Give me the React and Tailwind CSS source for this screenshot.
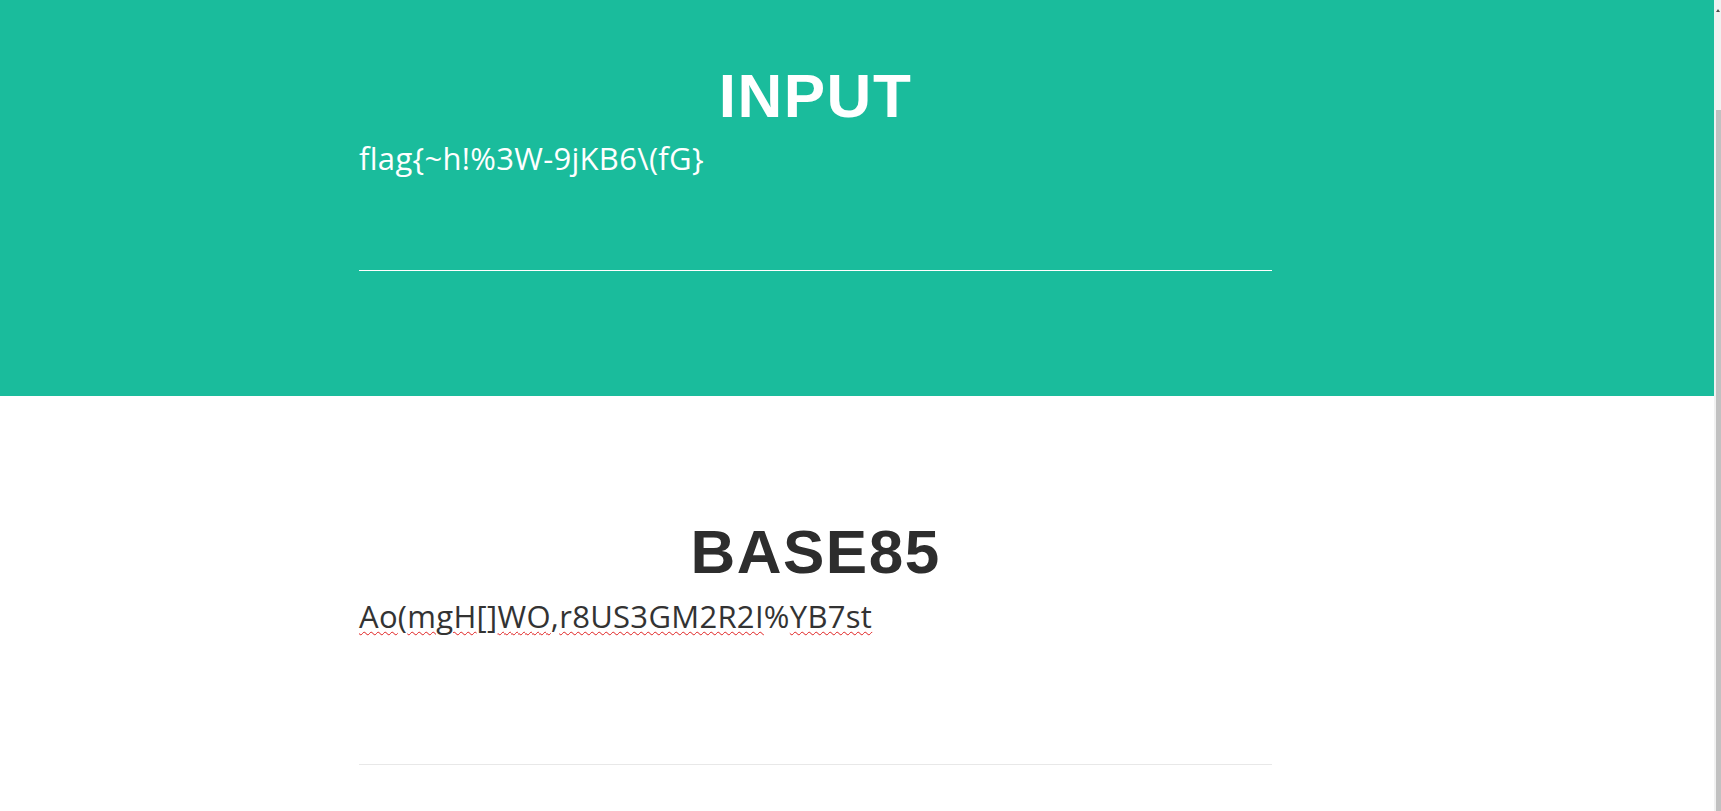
import React from 'react';

// Spellcheck-style squiggle segments of the encoded output
const OUTPUT = [
  ['Ao', true], ['(', false], ['mgH', true], ['[]', false], ['WO', true],
  [',', false], ['r8US3GM2R2I', true], ['%', false], ['YB7st', true],
];

function Section({ title, dark, children, className }) {
  return (
    <section className={className}>
      <div className="ml-[359px] w-[913px]">
        <h2
          className={
            'text-center text-[62px] leading-[62px] font-bold tracking-[1.5px] ' +
            (dark ? 'text-[#2d2d2d]' : 'text-white')
          }
          style={{ fontFamily: '"Liberation Sans", Arial, sans-serif' }}
        >
          {title}
        </h2>
        {children}
      </div>
    </section>
  );
}

function Scrollbar() {
  return (
    <div className="flex w-[7px] shrink-0 flex-col bg-[#f1f1f1]">
      <div className="flex h-[110px] justify-end pt-[9px] pr-[1px]">
        <div className="h-0 w-0 border-x-[2px] border-b-[3px] border-x-transparent border-b-[#505050]" />
      </div>
      <div className="ml-[2px] flex-1 bg-[#c1c1c1]" />
    </div>
  );
}

export default function App() {
  const font = { fontFamily: '"Open Sans", "Noto Sans", sans-serif' };
  return (
    <div className="flex h-[811px] w-full overflow-hidden bg-white">
      <main className="flex-1">
        <Section title="INPUT" className="h-[396px] bg-[#1abc9c] pt-[65px]">
          <div
            className="mt-[12px] h-[132px] border-b border-white text-[31px] leading-[38px] tracking-[0.3px] text-white"
            style={font}
          >
            flag{'{'}~h!%3W-9jKB6\(fG{'}'}
          </div>
        </Section>
        <Section title="BASE85" dark className="pt-[125px]">
          <div
            className="mt-[14px] h-[168px] border-b border-[#e8e8e8] text-[31px] leading-[38px] tracking-[0.3px] text-[#333]"
            style={font}
          >
            {OUTPUT.map(([t, bad], i) => (
              <span
                key={i}
                className={bad ? 'underline decoration-wavy decoration-[#e02020] decoration-1 underline-offset-[3px]' : ''}
              >
                {t}
              </span>
            ))}
          </div>
        </Section>
      </main>
      <Scrollbar />
    </div>
  );
}
